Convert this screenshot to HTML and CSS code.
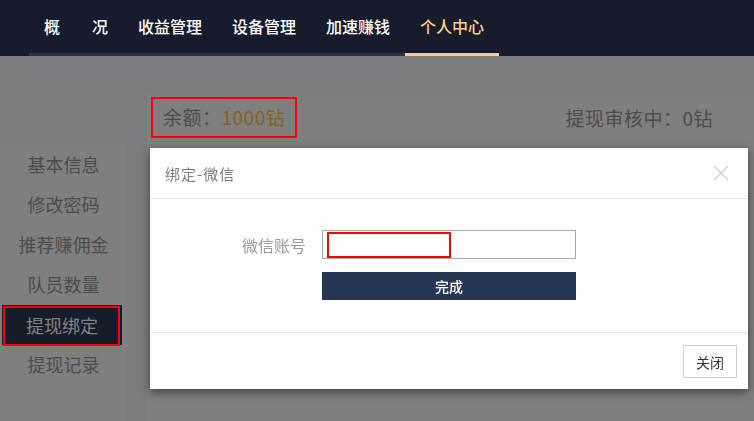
FILE: index.html
```html
<!DOCTYPE html>
<html lang="zh-CN">
<head>
    <meta charset="UTF-8">
    <meta name="viewport" content="width=device-width, initial-scale=1.0">
    <title>个人中心 - 提现绑定</title>
    <link rel="stylesheet" href="styles.css">
</head>
<body>
    <header class="topbar">
        <ul class="nav">
            <li>概　　况</li>
            <li>收益管理</li>
            <li>设备管理</li>
            <li>加速赚钱</li>
            <li class="active">个人中心</li>
        </ul>
    </header>

    <div class="main">
        <aside class="side">
            <ul>
                <li>基本信息</li>
                <li>修改密码</li>
                <li>推荐赚佣金</li>
                <li>队员数量</li>
                <li class="active">提现绑定<i class="mark mark-side"></i></li>
                <li>提现记录</li>
            </ul>
        </aside>

        <section class="content">
            <div class="balance">
                <span class="bal">余额：<em>1000钻</em><i class="mark"></i></span>
                <span class="pending">提现审核中：0钻</span>
            </div>
            <div class="content-body"></div>
        </section>
    </div>

    <!-- modal backdrop -->
    <div class="mask"></div>

    <div class="dialog">
        <div class="dialog-head">
            <span class="dialog-title">绑定-微信</span>
            <svg class="dialog-x" width="16" height="16" viewBox="0 0 16 16">
                <path d="M1 1 L15 15 M15 1 L1 15" stroke="#cdcdcd" stroke-width="1.4" fill="none"/>
            </svg>
        </div>
        <div class="dialog-body">
            <div class="form-row">
                <label for="wxAccount">微信账号</label>
                <div class="input-wrap">
                    <input type="text" id="wxAccount">
                    <i class="mark mark-input"></i>
                </div>
            </div>
            <button class="btn-done">完成</button>
        </div>
        <div class="dialog-foot">
            <button class="btn-close">关闭</button>
        </div>
    </div>
</body>
</html>
```

FILE: styles.css
```css
* {
    box-sizing: border-box;
}

body {
    margin: 0;
    font-family: "Noto Sans CJK SC", "Liberation Sans", sans-serif;
    background-color: #f8f9ff;
    height: 421px;
    overflow: hidden;
}

ul {
    list-style: none;
    margin: 0;
    padding: 0;
}

/* top nav sits above the backdrop */
.topbar {
    position: relative;
    z-index: 30;
    height: 56px;
    background-color: #161c2b;
    padding-left: 29px;
}

.nav {
    display: inline-flex;
    border-bottom: 3px solid #2a3248;
}

.nav li {
    padding: 0 15px;
    height: 53px;
    line-height: 53px;
    font-size: 16px;
    font-weight: 500;
    color: #fff;
    white-space: pre;
}

.nav li.active {
    color: #ffd27f;
    border-bottom: 3px solid #ffd27f;
    margin-bottom: -3px;
    height: 56px;
}

.main {
    display: flex;
    gap: 20px;
    padding-top: 38px;
}

.side {
    width: 127px;
    margin-top: 48px;
    background-color: #fefefe;
}

.side ul {
    padding: 3px 0 5px;
}

.side li {
    position: relative;
    height: 40px;
    line-height: 38px;
    text-align: center;
    font-size: 18px;
    color: #999;
}

.side li.active {
    background-color: #2c3854;
    color: #fff;
    margin: 0 5px 0 2px;
    line-height: 40px;
    height: 40px;
}

.content {
    flex: 1;
    height: 327px;
    background-color: #fefefe;
}

.balance {
    display: flex;
    justify-content: space-between;
    align-items: center;
    height: 48px;
    padding: 0 41px 0 16px;
    font-size: 19px;
    letter-spacing: 0.5px;
    color: #999;
    border-bottom: 2px solid #fff;
}

.bal {
    position: relative;
    padding: 7px 12px 8px;
    margin-left: -12px;
    line-height: 26px;
}

.bal em {
    font-style: normal;
    color: #ffc840;
}

/* red annotation boxes, drawn above the backdrop */
.mark {
    position: absolute;
    inset: 0;
    border: 2px solid #ff0000;
    z-index: 20;
}

.mark-side {
    inset: 1px 2px -1px 1px;
}

.mark-input {
    inset: 2px auto auto 5px;
    width: 124px;
    height: 26px;
}

.mask {
    position: fixed;
    top: 56px;
    left: 0;
    right: 0;
    bottom: 0;
    background-color: rgba(0, 0, 0, 0.5);
    z-index: 10;
}

.dialog {
    position: fixed;
    left: 150px;
    top: 148px;
    width: 598px;
    background-color: #fff;
    box-shadow: 0 3px 9px rgba(0, 0, 0, 0.5);
    z-index: 40;
}

.dialog-head {
    display: flex;
    justify-content: space-between;
    align-items: center;
    height: 51px;
    padding: 0 19px 0 15px;
    border-bottom: 1px solid #e5e5e5;
}

.dialog-title {
    font-size: 15px;
    letter-spacing: 1px;
    color: #7a7d82;
}

.dialog-body {
    padding: 31px 0 31px;
    height: 133px;
}

.form-row {
    display: flex;
    align-items: center;
    gap: 16px;
}

.form-row label {
    width: 156px;
    text-align: right;
    font-size: 16px;
    color: #999;
}

.input-wrap {
    position: relative;
    width: 254px;
    height: 29px;
}

.input-wrap input {
    width: 100%;
    height: 100%;
    border: 1px solid #a6a9b0;
    background-color: #fdfdfd;
    outline: none;
}

.btn-done {
    display: block;
    margin: 13px 0 0 172px;
    width: 254px;
    height: 28px;
    border: none;
    background-color: #293651;
    color: #fff;
    font-family: inherit;
    font-size: 14px;
    font-weight: 500;
    cursor: pointer;
}

.dialog-foot {
    display: flex;
    justify-content: flex-end;
    padding: 12px 11px 11px;
    border-top: 1px solid #e5e5e5;
}

.btn-close {
    width: 54px;
    height: 33px;
    border: 1px solid #ccc;
    background-color: #fff;
    color: #333;
    font-family: inherit;
    font-size: 14px;
    cursor: pointer;
}
```
